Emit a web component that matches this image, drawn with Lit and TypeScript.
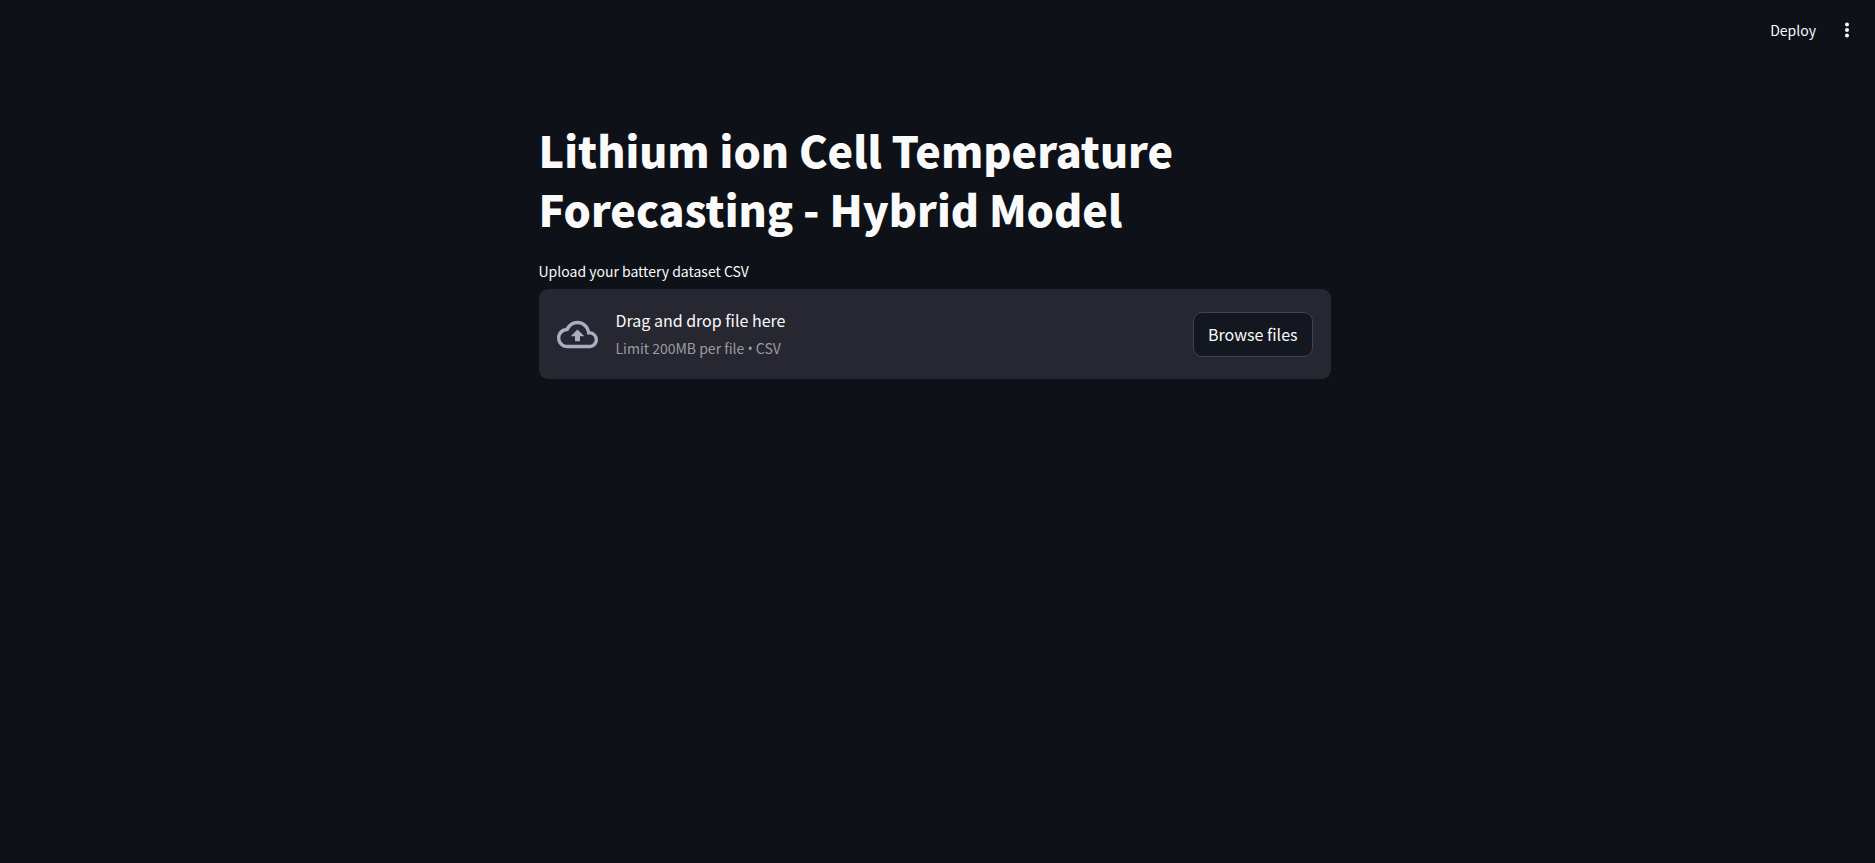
import { LitElement, html, css } from "lit";
import { customElement, query } from "lit/decorators.js";

@customElement("file-uploader")
export class FileUploader extends LitElement {
  @query(".input") private input!: HTMLInputElement;

  static styles = css`
    :host {
      display: block;
    }
    .label {
      display: block;
      font-size: 14px;
      line-height: 24px;
      margin-bottom: 6px;
    }
    .zone {
      display: flex;
      align-items: center;
      gap: 18px;
      padding: 16px 18px;
      border-radius: 9px;
      background: #262730;
    }
    .input {
      display: none;
    }
    .icon {
      width: 41px;
      height: 41px;
      flex: none;
      fill: #a9afc3;
    }
    .text {
      flex: 1;
      display: flex;
      flex-direction: column;
      padding-top: 1px;
    }
    .main {
      font-size: 16px;
      line-height: 28px;
    }
    .hint {
      font-size: 14px;
      line-height: 28px;
      color: #9c9c9f;
    }
    .bullet {
      font-family: "Open Sans", sans-serif;
    }
    .browse {
      font: inherit;
      font-size: 16px;
      line-height: 28px;
      color: inherit;
      padding: 7px 14px 8px;
      border: 1px solid #41444c;
      border-radius: 9px;
      background: #131720;
      cursor: pointer;
    }
  `;

  render() {
    return html`
      <label class="label" for="dataset">Upload your battery dataset CSV</label>
      <section class="zone">
        <input class="input" id="dataset" type="file" accept=".csv" />
        <svg class="icon" viewBox="0 0 24 24" aria-hidden="true">
          <path
            d="M19.35 10.04C18.67 6.59 15.64 4 12 4 9.11 4 6.6 5.64 5.35 8.04 2.34 8.36 0 10.91 0 14c0 3.31 2.69 6 6 6h13c2.76 0 5-2.24 5-5 0-2.64-2.05-4.78-4.65-4.96zM19 18H6c-2.21 0-4-1.79-4-4 0-2.05 1.53-3.76 3.56-3.97l1.07-.11.5-.95C8.08 7.14 9.94 6 12 6c2.62 0 4.88 1.86 5.39 4.43l.3 1.5 1.53.11c1.56.1 2.78 1.41 2.78 2.96 0 1.65-1.35 3-3 3zM8 13h2.55v3h2.9v-3H16l-4-4z"
          />
        </svg>
        <div class="text">
          <span class="main">Drag and drop file here</span>
          <span class="hint">Limit 200MB per file <span class="bullet">•</span> CSV</span>
        </div>
        <button class="browse" type="button" @click=${() => this.input.click()}>Browse files</button>
      </section>
    `;
  }
}

@customElement("app-root")
export class AppRoot extends LitElement {
  static styles = css`
    :host {
      display: block;
      box-sizing: border-box;
      min-height: 100vh;
      padding-right: 6px;
      background: #0e1117;
      color: #fafafa;
      font-family: "Source Sans Pro", "Noto Sans CJK SC", sans-serif;
    }
    .bar {
      display: flex;
      justify-content: flex-end;
      align-items: center;
      gap: 22px;
      height: 60px;
      padding: 0 13px;
    }
    .action {
      display: flex;
      align-items: center;
      font: inherit;
      font-size: 14px;
      line-height: 24px;
      color: inherit;
      padding: 0;
      border: 0;
      background: none;
      cursor: pointer;
    }
    .dots {
      width: 18px;
      height: 18px;
      fill: currentColor;
    }
    .content {
      box-sizing: border-box;
      max-width: 828px;
      margin: 0 auto;
      padding: 60px 18px 0;
    }
    .title {
      margin: 0 0 21px;
      font-size: 43px;
      line-height: 59px;
      font-weight: 900;
    }
  `;

  render() {
    return html`
      <header class="bar">
        <button class="action" type="button">Deploy</button>
        <button class="action" type="button" aria-label="Main menu">
          <svg class="dots" viewBox="0 0 18 18" aria-hidden="true">
            <circle cx="9" cy="3.4" r="2" />
            <circle cx="9" cy="9" r="2" />
            <circle cx="9" cy="14.6" r="2" />
          </svg>
        </button>
      </header>
      <main class="content">
        <h1 class="title">Lithium ion Cell Temperature Forecasting - Hybrid Model</h1>
        <file-uploader></file-uploader>
      </main>
    `;
  }
}
